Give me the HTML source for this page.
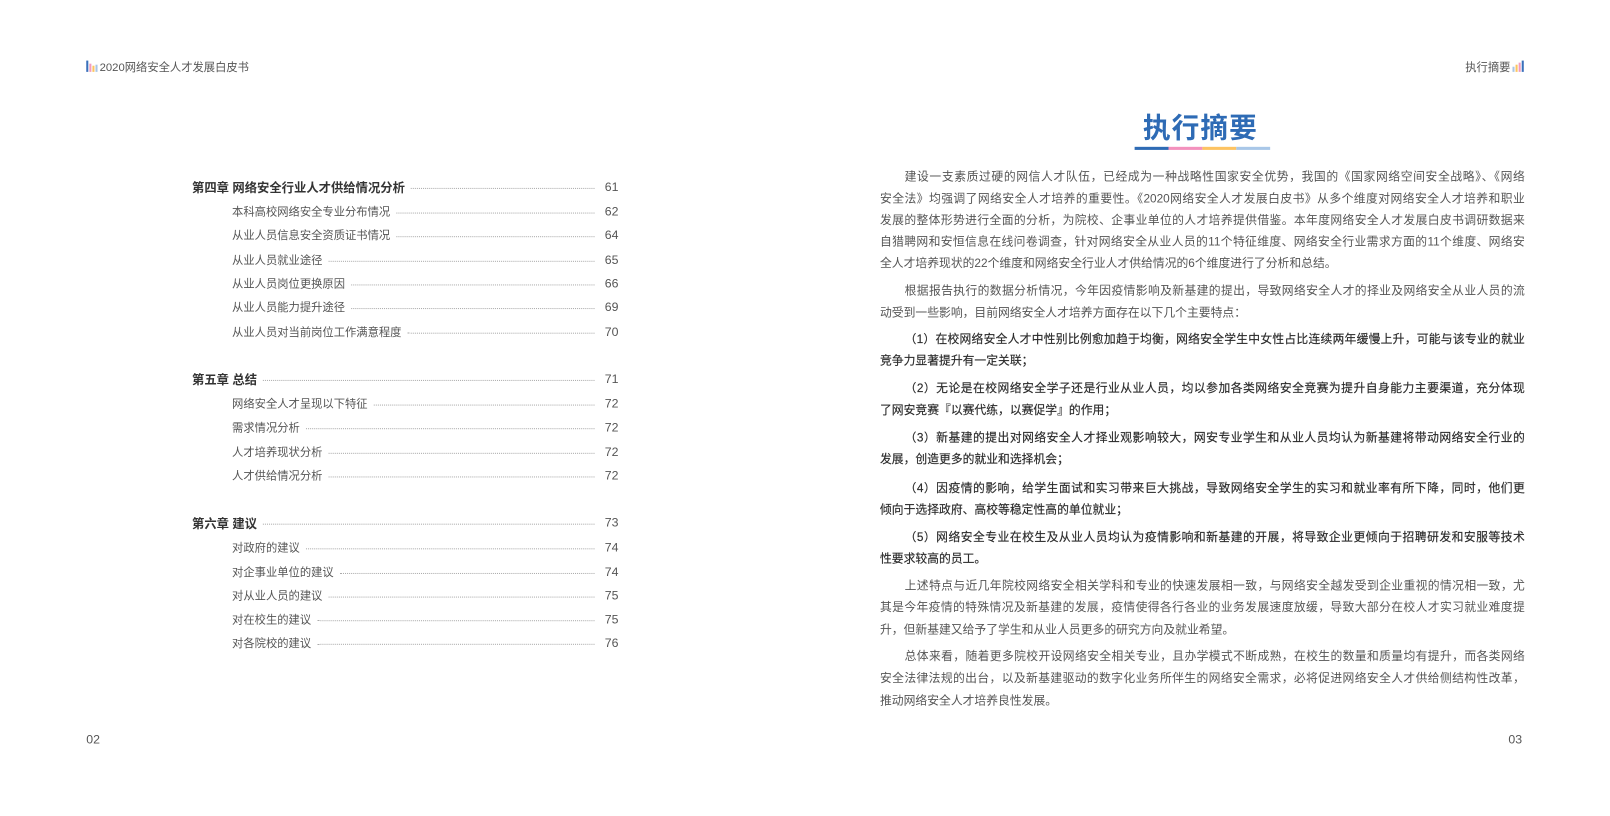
<!DOCTYPE html>
<html><head><meta charset="utf-8"><style>
*{margin:0;padding:0;box-sizing:border-box}
body{width:1610px;height:816px;background:#fff;position:relative;overflow:hidden;font-family:"Liberation Sans","Noto Sans CJK SC",sans-serif;color:#555}
#w{position:absolute;left:0;top:0;width:1568px;height:795px;transform:scale(1.0268);transform-origin:0 0}
.a{position:absolute;white-space:nowrap}
.l{position:absolute;left:857px;width:628px;height:18px;line-height:18px;font-size:11.5px;text-align:justify;text-align-last:justify;white-space:nowrap;overflow:visible;color:#555}
.l.e{text-align-last:left}
.l.i{padding-left:24px}
.b{color:#2a2a2a;-webkit-text-stroke:0.15px #2a2a2a}
.t{position:absolute;display:flex;align-items:center;height:16px;font-size:11px;color:#555;width:414px}
.t .d{flex:1;border-bottom:1.5px dotted #aaa;margin:0 10px 0 6px;height:0;position:relative;top:1px}
.t .n{width:12px;font-size:12px;color:#555}
.t.c{font-weight:bold;color:#333;font-size:12px}
.t.c .n{font-weight:normal}
.t.s{left:226px;width:375px}
</style></head><body><div id="w">
<div class="a" style="left:84px;top:58px;width:12px;height:12px">
<span style="position:absolute;left:0;bottom:0;width:1.5px;height:11px;background:#3a70bb"></span>
<span style="position:absolute;left:3px;bottom:0;width:1.5px;height:8px;background:#f29bbf"></span>
<span style="position:absolute;left:6px;bottom:0;width:1.5px;height:6px;background:#fcc55e"></span>
<span style="position:absolute;left:9px;bottom:0;width:1.5px;height:7px;background:#a9c6e6"></span>
</div>
<div class="a" style="left:97px;top:57px;font-size:11px;color:#555">2020网络安全人才发展白皮书</div>
<div class="a" style="left:1427px;top:57px;font-size:11px;color:#555">执行摘要</div>
<div class="a" style="left:1473px;top:58px;width:12px;height:12px">
<span style="position:absolute;left:0;bottom:0;width:1.5px;height:5px;background:#a9c6e6"></span>
<span style="position:absolute;left:3px;bottom:0;width:1.5px;height:7px;background:#fcc55e"></span>
<span style="position:absolute;left:6px;bottom:0;width:1.5px;height:9px;background:#f29bbf"></span>
<span style="position:absolute;left:9px;bottom:0;width:1.5px;height:11px;background:#3a70bb"></span>
</div>
<div class="a" style="left:84px;top:713px;font-size:12px;color:#555">02</div>
<div class="a" style="left:1469px;top:713px;font-size:12px;color:#555">03</div>

<div class="t c" style="left:187px;top:174px">第四章 网络安全行业人才供给情况分析<span class="d"></span><span class="n">61</span></div>
<div class="t s" style="top:198px">本科高校网络安全专业分布情况<span class="d"></span><span class="n">62</span></div>
<div class="t s" style="top:221px">从业人员信息安全资质证书情况<span class="d"></span><span class="n">64</span></div>
<div class="t s" style="top:245px">从业人员就业途径<span class="d"></span><span class="n">65</span></div>
<div class="t s" style="top:268px">从业人员岗位更换原因<span class="d"></span><span class="n">66</span></div>
<div class="t s" style="top:291px">从业人员能力提升途径<span class="d"></span><span class="n">69</span></div>
<div class="t s" style="top:315px">从业人员对当前岗位工作满意程度<span class="d"></span><span class="n">70</span></div>

<div class="t c" style="left:187px;top:361px">第五章 总结<span class="d"></span><span class="n">71</span></div>
<div class="t s" style="top:385px">网络安全人才呈现以下特征<span class="d"></span><span class="n">72</span></div>
<div class="t s" style="top:408px">需求情况分析<span class="d"></span><span class="n">72</span></div>
<div class="t s" style="top:432px">人才培养现状分析<span class="d"></span><span class="n">72</span></div>
<div class="t s" style="top:455px">人才供给情况分析<span class="d"></span><span class="n">72</span></div>

<div class="t c" style="left:187px;top:501px">第六章 建议<span class="d"></span><span class="n">73</span></div>
<div class="t s" style="top:525px">对政府的建议<span class="d"></span><span class="n">74</span></div>
<div class="t s" style="top:549px">对企事业单位的建议<span class="d"></span><span class="n">74</span></div>
<div class="t s" style="top:572px">对从业人员的建议<span class="d"></span><span class="n">75</span></div>
<div class="t s" style="top:595px">对在校生的建议<span class="d"></span><span class="n">75</span></div>
<div class="t s" style="top:618px">对各院校的建议<span class="d"></span><span class="n">76</span></div>

<div class="a" style="left:1113px;top:103px;width:112px;text-align:center;font-size:27px;font-weight:bold;color:#2e6bb5;letter-spacing:1px">执行摘要</div>
<div class="a" style="left:1105px;top:143px;height:3px;width:33px;background:#2e6bb5"></div>
<div class="a" style="left:1138px;top:143px;height:3px;width:33px;background:#f391bd"></div>
<div class="a" style="left:1171px;top:143px;height:3px;width:33px;background:#fdc362"></div>
<div class="a" style="left:1204px;top:143px;height:3px;width:33px;background:#a9c7e8"></div>

<div class="l i" style="top:164px">建设一支素质过硬的网信人才队伍，已经成为一种战略性国家安全优势，我国的《国家网络空间安全战略》、《网络</div>
<div class="l" style="top:185px">安全法》均强调了网络安全人才培养的重要性。《2020网络安全人才发展白皮书》从多个维度对网络安全人才培养和职业</div>
<div class="l" style="top:206px">发展的整体形势进行全面的分析，为院校、企事业单位的人才培养提供借鉴。本年度网络安全人才发展白皮书调研数据来</div>
<div class="l" style="top:227px">自猎聘网和安恒信息在线问卷调查，针对网络安全从业人员的11个特征维度、网络安全行业需求方面的11个维度、网络安</div>
<div class="l e" style="top:248px">全人才培养现状的22个维度和网络安全行业人才供给情况的6个维度进行了分析和总结。</div>

<div class="l i" style="top:275px">根据报告执行的数据分析情况，今年因疫情影响及新基建的提出，导致网络安全人才的择业及网络安全从业人员的流</div>
<div class="l e" style="top:296px">动受到一些影响，目前网络安全人才培养方面存在以下几个主要特点：</div>

<div class="l i b" style="top:322px">（1）在校网络安全人才中性别比例愈加趋于均衡，网络安全学生中女性占比连续两年缓慢上升，可能与该专业的就业</div>
<div class="l e b" style="top:343px">竞争力显著提升有一定关联；</div>
<div class="l i b" style="top:370px">（2）无论是在校网络安全学子还是行业从业人员，均以参加各类网络安全竞赛为提升自身能力主要渠道，充分体现</div>
<div class="l e b" style="top:391px">了网安竞赛『以赛代练，以赛促学』的作用；</div>
<div class="l i b" style="top:418px">（3）新基建的提出对网络安全人才择业观影响较大，网安专业学生和从业人员均认为新基建将带动网络安全行业的</div>
<div class="l e b" style="top:439px">发展，创造更多的就业和选择机会；</div>
<div class="l i b" style="top:467px">（4）因疫情的影响，给学生面试和实习带来巨大挑战，导致网络安全学生的实习和就业率有所下降，同时，他们更</div>
<div class="l e b" style="top:488px">倾向于选择政府、高校等稳定性高的单位就业；</div>
<div class="l i b" style="top:515px">（5）网络安全专业在校生及从业人员均认为疫情影响和新基建的开展，将导致企业更倾向于招聘研发和安服等技术</div>
<div class="l e b" style="top:536px">性要求较高的员工。</div>

<div class="l i" style="top:562px">上述特点与近几年院校网络安全相关学科和专业的快速发展相一致，与网络安全越发受到企业重视的情况相一致，尤</div>
<div class="l" style="top:583px">其是今年疫情的特殊情况及新基建的发展，疫情使得各行各业的业务发展速度放缓，导致大部分在校人才实习就业难度提</div>
<div class="l e" style="top:605px">升，但新基建又给予了学生和从业人员更多的研究方向及就业希望。</div>

<div class="l i" style="top:631px">总体来看，随着更多院校开设网络安全相关专业，且办学模式不断成熟，在校生的数量和质量均有提升，而各类网络</div>
<div class="l" style="top:652px">安全法律法规的出台，以及新基建驱动的数字化业务所伴生的网络安全需求，必将促进网络安全人才供给侧结构性改革，</div>
<div class="l e" style="top:674px">推动网络安全人才培养良性发展。</div>
</div></body></html>
